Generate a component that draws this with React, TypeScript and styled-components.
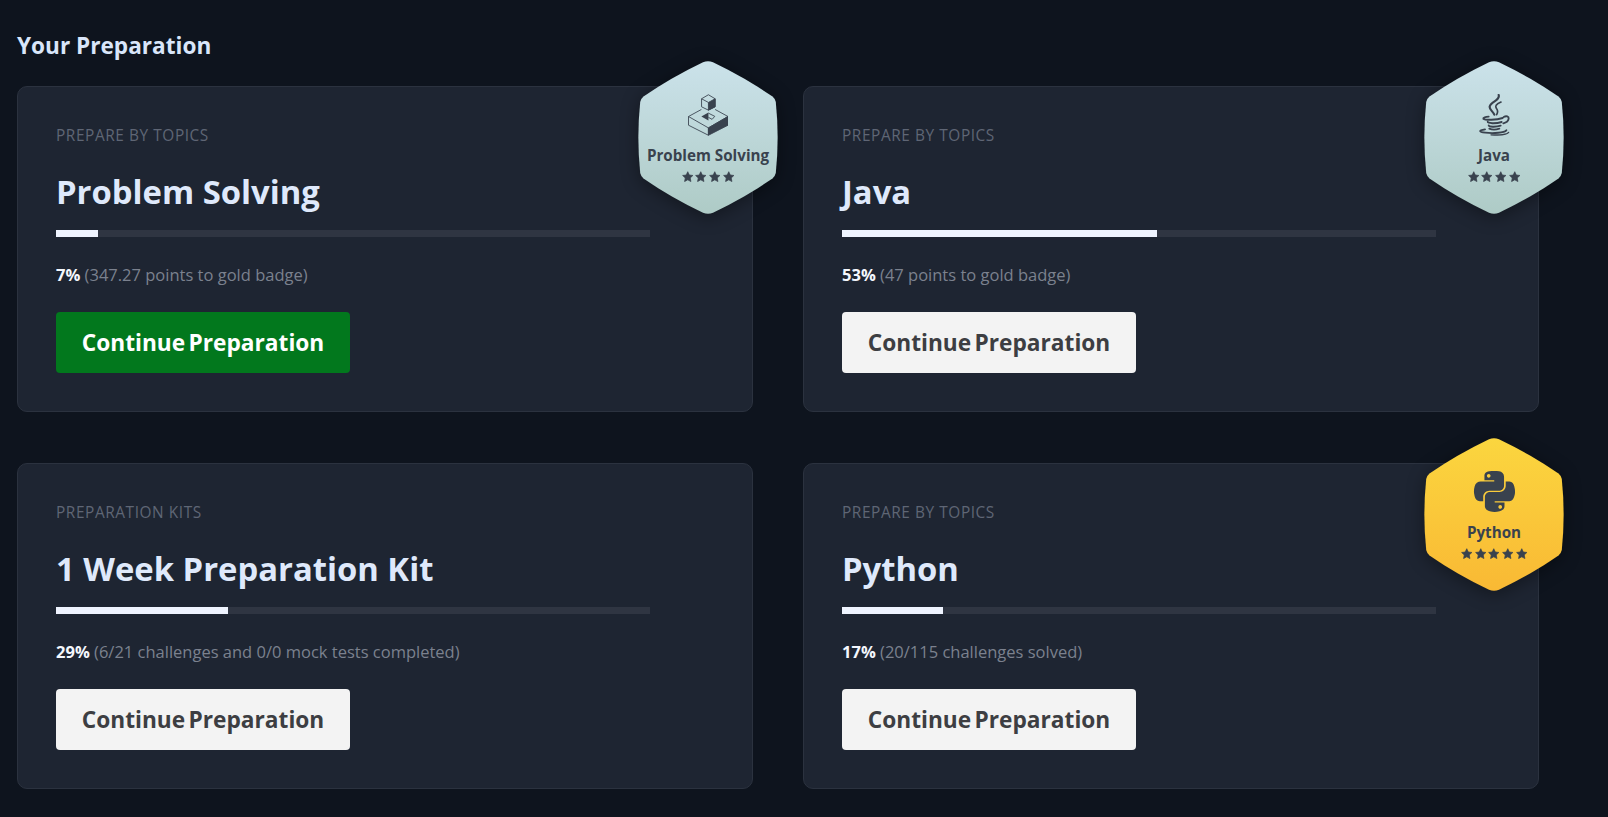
import React from "react";
import styled, { createGlobalStyle } from "styled-components";
import { FaPython } from "react-icons/fa";

const GlobalStyle = createGlobalStyle`
  *, *::before, *::after { box-sizing: border-box; }
  html, body { margin: 0; min-height: 100%; background: #0e141e; }
  body { font-family: "Open Sans", "Noto Sans", sans-serif; }
`;

const Page = styled.main`
  height: 817px;
  overflow: hidden;
  padding: 30px 0 0 17px;
  background: #0e141e;
`;

const Heading = styled.h2`
  margin: 0 0 24px;
  font-size: 22.6px;
  line-height: 32px;
  font-weight: 700;
  color: #d9e6fa;
`;

const Grid = styled.section`
  display: grid;
  grid-template-columns: repeat(2, 735.5px);
  grid-auto-rows: 326px;
  gap: 51px 50.5px;
`;

const Card = styled.article`
  position: relative;
  display: flex;
  flex-direction: column;
  align-items: flex-start;
  padding: 38px 38px 0;
  border: 1px solid #2b323f;
  border-radius: 10px;
  background: #1e2532;
`;

const Label = styled.div`
  font-size: 15.4px;
  line-height: 22px;
  letter-spacing: 0.58px;
  text-transform: uppercase;
  color: #5f6675;
`;

const Title = styled.h3`
  margin: 22px 0 0;
  font-size: 32.8px;
  line-height: 46px;
  font-weight: 700;
  color: #dfe9fb;
`;

const Track = styled.div`
  width: 594px;
  height: 7px;
  margin-top: 15px;
  background: #2f3542;
`;

const Fill = styled.div`
  height: 100%;
  background: #eff4ff;
`;

const Status = styled.p`
  margin: 26px 0 0;
  font-size: 16.5px;
  line-height: 24px;
  color: #7b818e;
`;

const Percent = styled.strong`
  font-weight: 700;
  color: #f4f7fd;
`;

const Button = styled.button<{ $primary?: boolean }>`
  width: 294px;
  height: 61px;
  margin-top: 25px;
  padding: 0;
  border: 0;
  border-radius: 4px;
  font: 700 22.7px/32px "Open Sans", "Noto Sans", sans-serif;
  word-spacing: -2.5px;
  white-space: nowrap;
  color: ${({ $primary }) => ($primary ? "#ffffff" : "#3d3e42")};
  background: ${({ $primary }) => ($primary ? "#02781d" : "#f3f3f3")};
`;

const BadgeBox = styled.div`
  position: absolute;
  top: -26px;
  right: -26.5px;
  width: 140px;
  height: 153px;
  display: flex;
  flex-direction: column;
  align-items: center;
  padding-top: 32.5px;
  color: #39424e;
`;

const Hexagon = styled.svg`
  position: absolute;
  inset: 0;
  overflow: visible;
  filter: drop-shadow(0 3px 9px rgba(0, 0, 0, 0.4));
`;

const BadgeIcon = styled.div`
  position: relative;
  display: flex;
  align-items: center;
  justify-content: center;
  height: 42px;
`;

const BadgeName = styled.div`
  position: relative;
  margin-top: 8.5px;
  font-size: 15.2px;
  line-height: 22px;
  font-weight: 700;
  white-space: nowrap;
`;

const Stars = styled.div`
  position: relative;
  display: flex;
  gap: 2.2px;
  margin-top: 4.5px;
`;

type Tone = "silver" | "gold";

const tones: Record<Tone, [string, string]> = {
  silver: ["#cbe2ea", "#aecbc6"],
  gold: ["#fbd63f", "#f9b934"],
};

function ProblemSolvingIcon() {
  return (
    <svg width="40.5" height="42" viewBox="0 0 121 125" fill="none" stroke="currentColor" strokeWidth="2.6" strokeLinejoin="round">
      <path d="M40 46 1.5 67v26L61 123V101L1.5 67M81 46l38.5 21L61 101" />
      <path d="M119.5 67v26L61 123V101z" fill="currentColor" />
      <path d="M61 2 81 14v24L61 48 40.5 38V14zM40.5 14 61 25" />
      <path d="M81 14v24L61 48V25z" fill="currentColor" />
      <path d="M61 55v24L40 67z" fill="currentColor" stroke="none" />
      <path d="M61 57l19 9.5-8 9-11-6" />
    </svg>
  );
}

function JavaIcon() {
  return (
    <svg width="31" height="42" viewBox="0 0 93 126" fill="none" stroke="currentColor" strokeWidth="5.6" strokeLinecap="round" strokeLinejoin="round">
      <path d="M59 3C65 20 35 22 32 38C31 47 42 52 46 62" strokeWidth="6.5" />
      <path d="M66 24C50 31 48 36 52 43C57 49 57 55 53 62" strokeWidth="5" />
      <path d="M29 68C20 69 12 71 13 74C19 79 52 78 71 72" />
      <path d="M74 69C82 65 90 67 89 74C88 82 81 86 73 88" />
      <path d="M26 83C25 88 49 90 68 84" />
      <path d="M29 94C29 99 50 100 65 95" />
      <path d="M18 106C-2 109-1 114 19 116C44 119 76 116 82 109" />
      <path d="M31 104C38 107 52 107 61 104" />
      <path d="M36 122.5C60 124 86 122 89 115" strokeWidth="4" />
    </svg>
  );
}

function Star() {
  return (
    <svg width="11.5" height="11.5" viewBox="0 0 24 24" fill="currentColor" stroke="currentColor" strokeWidth="1.5" strokeLinejoin="round">
      <path d="M12 1.5l3.2 6.9 7.5.9-5.5 5.2 1.4 7.5L12 18.4 5.4 22l1.4-7.5L1.3 9.3l7.5-.9z" />
    </svg>
  );
}

interface BadgeData {
  name: string;
  tone: Tone;
  stars: number;
  icon: React.ReactNode;
}

function Badge({ name, tone, stars, icon }: BadgeData) {
  const id = `badge-${name.replace(/\s/g, "-")}`;
  return (
    <BadgeBox>
      <Hexagon width="140" height="153" viewBox="0 0 140 153">
        <defs>
          <linearGradient id={id} x1="0" y1="0" x2="0" y2="1">
            <stop offset="0" stopColor={tones[tone][0]} />
            <stop offset="1" stopColor={tones[tone][1]} />
          </linearGradient>
        </defs>
        <path
          fill={`url(#${id})`}
          d="M65 1.2Q70-.5 75 1.2Q108 17 134.5 35.5Q137 37.5 137.8 41Q141.5 76.5 137.8 112Q137 115.5 134.5 117.5Q108 136 75 151.8Q70 153.5 65 151.8Q32 136 5.5 117.5Q3 115.5 2.2 112Q-1.5 76.5 2.2 41Q3 37.5 5.5 35.5Q32 17 65 1.2Z"
        />
      </Hexagon>
      <BadgeIcon>{icon}</BadgeIcon>
      <BadgeName>{name}</BadgeName>
      <Stars>
        {Array.from({ length: stars }, (_, i) => (
          <Star key={i} />
        ))}
      </Stars>
    </BadgeBox>
  );
}

interface Preparation {
  label: string;
  title: string;
  percent: number;
  detail: string;
  primary?: boolean;
  badge?: BadgeData;
}

const preparations: Preparation[] = [
  {
    label: "Prepare by topics",
    title: "Problem Solving",
    percent: 7,
    detail: "(347.27 points to gold badge)",
    primary: true,
    badge: { name: "Problem Solving", tone: "silver", stars: 4, icon: <ProblemSolvingIcon /> },
  },
  {
    label: "Prepare by topics",
    title: "Java",
    percent: 53,
    detail: "(47 points to gold badge)",
    badge: { name: "Java", tone: "silver", stars: 4, icon: <JavaIcon /> },
  },
  {
    label: "Preparation kits",
    title: "1 Week Preparation Kit",
    percent: 29,
    detail: "(6/21 challenges and 0/0 mock tests completed)",
  },
  {
    label: "Prepare by topics",
    title: "Python",
    percent: 17,
    detail: "(20/115 challenges solved)",
    badge: { name: "Python", tone: "gold", stars: 5, icon: <FaPython size={47} /> },
  },
];

export default function App() {
  return (
    <Page>
      <GlobalStyle />
      <Heading>Your Preparation</Heading>
      <Grid>
        {preparations.map((item) => (
          <Card key={item.title}>
            <Label>{item.label}</Label>
            <Title>{item.title}</Title>
            <Track>
              <Fill style={{ width: `${item.percent}%` }} />
            </Track>
            <Status>
              <Percent>{item.percent}%</Percent> {item.detail}
            </Status>
            <Button $primary={item.primary}>Continue Preparation</Button>
            {item.badge && <Badge {...item.badge} />}
          </Card>
        ))}
      </Grid>
    </Page>
  );
}
